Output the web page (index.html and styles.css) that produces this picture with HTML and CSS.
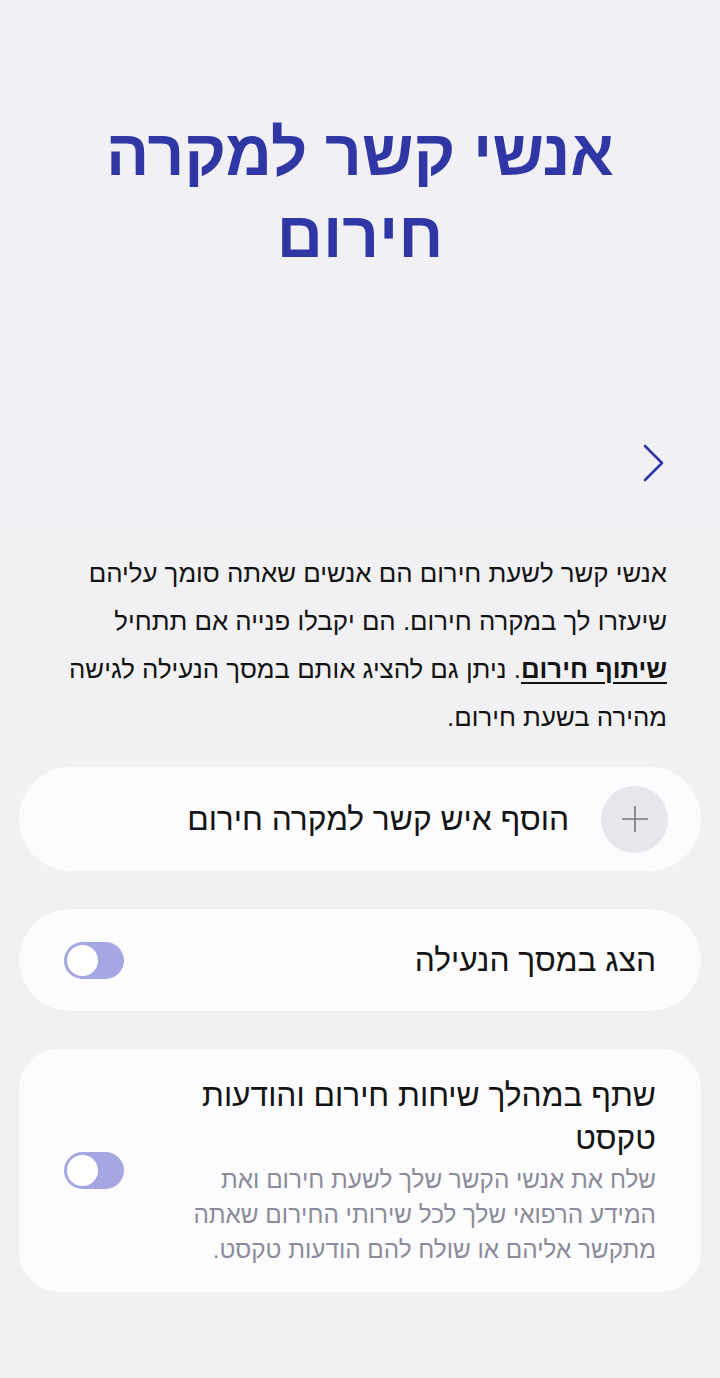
FILE: index.html
```html
<!DOCTYPE html>
<html lang="he" dir="rtl">
<head>
<meta charset="utf-8">
<link rel="stylesheet" href="styles.css">
</head>
<body>
<header class="hero">
  <h1 class="hero-title">אנשי קשר למקרה חירום</h1>
  <div class="hero-nav">
    <svg class="chevron" width="24" height="40" viewBox="0 0 24 40" aria-hidden="true">
      <path d="M3 3 L20 20 L3 37" fill="none" stroke="#3037a5" stroke-width="2.6" stroke-linecap="round" stroke-linejoin="round"/>
    </svg>
  </div>
</header>
<main class="content">
  <p class="intro">אנשי קשר לשעת חירום הם אנשים שאתה סומך עליהם שיעזרו לך במקרה חירום. הם יקבלו פנייה אם תתחיל <a class="link">שיתוף חירום</a>. ניתן גם להציג אותם במסך הנעילה לגישה מהירה בשעת חירום.</p>

  <section class="card card-add">
    <span class="plus-btn">
      <svg width="28" height="28" viewBox="0 0 28 28" aria-hidden="true">
        <path d="M14 1 V27 M1 14 H27" stroke="#7a7a7e" stroke-width="1.6" fill="none"/>
      </svg>
    </span>
    <span class="card-label">הוסף איש קשר למקרה חירום</span>
  </section>

  <section class="card card-switch">
    <span class="card-label">הצג במסך הנעילה</span>
    <span class="toggle"><span class="thumb"></span></span>
  </section>

  <section class="card card-switch card-tall">
    <div class="card-text">
      <div class="card-title">שתף במהלך שיחות חירום והודעות טקסט</div>
      <div class="card-sub">שלח את אנשי הקשר שלך לשעת חירום ואת המידע הרפואי שלך לכל שירותי החירום שאתה מתקשר אליהם או שולח להם הודעות טקסט.</div>
    </div>
    <span class="toggle"><span class="thumb"></span></span>
  </section>
</main>
</body>
</html>
```
FILE: styles.css
```css
html, body {
  margin: 0;
  padding: 0;
}
body {
  width: 720px;
  min-height: 1378px;
  background: #f1f1f3;
  font-family: "Liberation Sans", "DejaVu Sans", sans-serif;
  color: #141414;
}
.hero {
  height: 525px;
  background: #f0f0f5;
  display: flex;
  flex-direction: column;
  box-sizing: border-box;
  padding-top: 112px;
}
.hero-title {
  margin: 0 auto;
  width: 560px;
  text-align: center;
  font-size: 64px;
  line-height: 82px;
  font-weight: 700;
  color: #3037a5;
}
.hero-nav {
  margin-top: auto;
  padding: 0 54px 42px 0;
  display: flex;
  justify-content: flex-start;
}
.content {
  padding: 24px 19px 0;
  display: flex;
  flex-direction: column;
}
.intro {
  margin: 0 34px 26px 36px;
  font-size: 25.8px;
  line-height: 48px;
}
.link {
  font-weight: 700;
  text-decoration: underline;
  text-underline-offset: 4px;
  color: #141414;
}
.card {
  background: #fcfcfe;
  border-radius: 52px;
  display: flex;
  align-items: center;
  box-sizing: border-box;
  margin-bottom: 38px;
}
.card-add {
  height: 104px;
  padding: 0 33px 0 0;
  gap: 32px;
}
.plus-btn {
  width: 67px;
  height: 67px;
  border-radius: 50%;
  background: #e7e7eb;
  display: flex;
  align-items: center;
  justify-content: center;
  flex: none;
}
.card-label {
  font-size: 31.7px;
}
.card-switch {
  height: 102px;
  padding: 0 45px 0 45px;
  justify-content: space-between;
}
.card-tall {
  height: 243px;
  border-radius: 40px;
  align-items: center;
}
.card-text {
  width: 480px;
}
.card-title {
  font-size: 31.7px;
  line-height: 43px;
}
.card-sub {
  font-size: 24.3px;
  line-height: 35px;
  color: #8b8b99;
  margin-top: 2px;
}
.toggle {
  width: 60px;
  height: 37px;
  border-radius: 19px;
  background: #a6a6e3;
  display: flex;
  align-items: center;
  padding: 0 3px;
  box-sizing: border-box;
  flex: none;
  justify-content: flex-end;
}
.thumb {
  width: 31px;
  height: 31px;
  border-radius: 50%;
  background: #fff;
}
```
